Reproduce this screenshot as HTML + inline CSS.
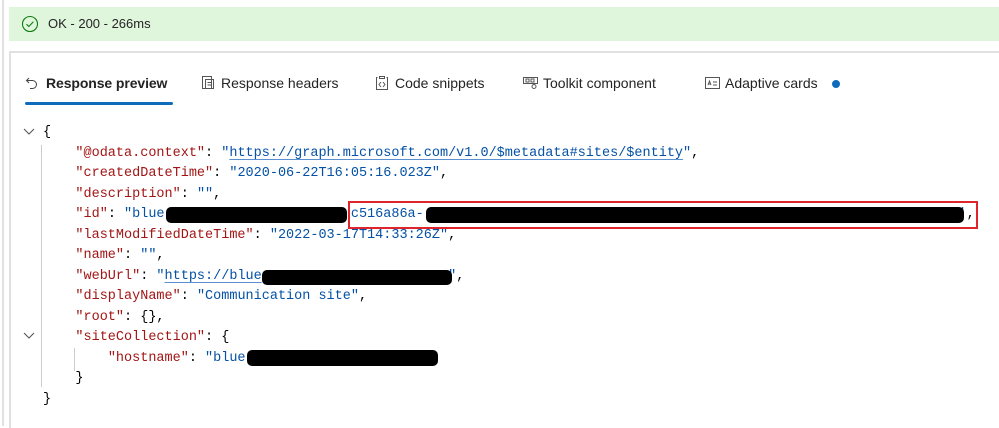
<!DOCTYPE html>
<html><head><style>
body{margin:0;width:999px;height:426px;background:#fff;position:relative;overflow:hidden;font-family:"Liberation Sans",sans-serif;}
.ab{position:absolute;}
.code{position:absolute;font-family:"Liberation Mono",monospace;font-size:13.5px;white-space:pre;line-height:20.5px;color:#000;}
.k{color:#a31515}.s{color:#0451a5}.u{color:#0451a5;text-decoration:underline;text-underline-offset:3px;text-decoration-color:#5a8fd0}
.tab{position:absolute;top:75px;font-size:14px;color:#242424;}
.blk{position:absolute;background:#000;border-radius:5px;}
</style></head><body>
<div class="ab" style="left:2px;top:0;width:2px;height:426px;background:#e1e1e1"></div>
<div class="ab" style="left:9px;top:7px;width:990px;height:34px;background:#dff6dd"></div>
<svg class="ab" style="left:21px;top:15px" width="18" height="18" viewBox="0 0 18 18"><circle cx="9" cy="9" r="7.5" fill="none" stroke="#107c10" stroke-width="1.1"/><path d="M5.5 9.2l2.3 2.3 4.6-4.8" fill="none" stroke="#107c10" stroke-width="1.1"/></svg>
<div class="ab" style="left:48px;top:16px;font-size:13px;color:#242424">OK - 200 - 266ms</div>
<div class="ab" style="left:9px;top:51px;width:990px;height:375px;border-top:2px solid #e1e1e1;border-left:2px solid #e1e1e1"></div>
<svg class="ab" style="left:25px;top:76px" width="14" height="14" viewBox="0 0 14 14" fill="none" stroke="#444" stroke-width="1"><path d="M4 2L1.5 4.5 4 7M1.5 4.5h6a4 4 0 010 8H5"/></svg>
<div class="tab" style="left:46px;font-weight:bold;font-size:14px;letter-spacing:-0.1px;color:#242424">Response preview</div>
<div class="ab" style="left:25px;top:102px;width:148px;height:3px;background:#0f6cbd;border-radius:2px"></div>
<svg class="ab" style="left:200px;top:75px" width="16" height="16" viewBox="0 0 16 16" fill="none" stroke="#555" stroke-width="1"><rect x="2.5" y="1.5" width="9" height="12"/><rect x="5.5" y="4.5" width="8" height="9"/><path d="M7.5 7.5h4M7.5 10h4"/></svg>
<div class="tab" style="left:221px">Response headers</div>
<svg class="ab" style="left:374px;top:74px" width="16" height="17" viewBox="0 0 16 17" fill="none" stroke="#555" stroke-width="1"><path d="M3.5 3.5h-1v12h11v-12h-1M5.5 2.5h5v2h-5z"/><path d="M7 8l-2 2.5 2 2.5M9 8l2 2.5-2 2.5"/></svg>
<div class="tab" style="left:395px">Code snippets</div>
<svg class="ab" style="left:522px;top:76px" width="17" height="14" viewBox="0 0 17 14" fill="none" stroke="#555" stroke-width="1"><rect x="1.5" y="1.5" width="14" height="6"/><rect x="4" y="3" width="3" height="3"/><rect x="9" y="3" width="3" height="3"/><circle cx="12" cy="10.5" r="2"/></svg>
<div class="tab" style="left:543px">Toolkit component</div>
<svg class="ab" style="left:704px;top:76px" width="17" height="14" viewBox="0 0 17 14" fill="none" stroke="#555" stroke-width="1"><rect x="1.5" y="1.5" width="14" height="11"/><path d="M4 9l1.5-4 1.5 4M4.5 8h2M9 6h4M9 9h4"/></svg>
<div class="tab" style="left:725px">Adaptive cards</div>
<div class="ab" style="left:832px;top:80px;width:8px;height:8px;border-radius:50%;background:#0f6cbd"></div>

<svg class="ab" style="left:22px;top:126px" width="14" height="12" viewBox="0 0 14 12"><path d="M2 3l5 5 5-5" fill="none" stroke="#555" stroke-width="1.1"/></svg>
<svg class="ab" style="left:22px;top:330px" width="14" height="12" viewBox="0 0 14 12"><path d="M2 3l5 5 5-5" fill="none" stroke="#555" stroke-width="1.1"/></svg>
<div class="ab" style="left:41px;top:145px;width:1px;height:242px;background:#ccc"></div>
<div class="ab" style="left:74px;top:348px;width:1px;height:23px;background:#ccc"></div>
<div class="code" style="left:43px;top:123px">{
    <span class="k">"@odata.context"</span>: <span class="s">"</span><span class="u">https://graph.microsoft.com/v1.0/$metadata#sites/$entity</span><span class="s">"</span>,
    <span class="k">"createdDateTime"</span>: <span class="s">"2020-06-22T16:05:16.023Z"</span>,
    <span class="k">"description"</span>: <span class="s">""</span>,
    <span class="k">"id"</span>: <span class="s">"blue                       c516a86a-                                                                  '</span>,
    <span class="k">"lastModifiedDateTime"</span>: <span class="s">"2022-03-17T14:33:26Z"</span>,
    <span class="k">"name"</span>: <span class="s">""</span>,
    <span class="k">"webUrl"</span>: <span class="s">"</span><span class="u">https://blue</span><span class="s">                       "</span>,
    <span class="k">"displayName"</span>: <span class="s">"Communication site"</span>,
    <span class="k">"root"</span>: {},
    <span class="k">"siteCollection"</span>: {
        <span class="k">"hostname"</span>: <span class="s">"blue</span>
    }
}</div>
<div class="blk" style="left:166px;top:207px;width:181px;height:16px"></div>
<div class="blk" style="left:426px;top:207px;width:538px;height:16px"></div>
<div class="ab" style="left:348px;top:201px;width:626px;height:24px;border:2px solid #e0242b"></div>
<div class="blk" style="left:262px;top:270px;width:190px;height:15px"></div>
<div class="blk" style="left:247px;top:350px;width:191px;height:16px"></div>
</body></html>
